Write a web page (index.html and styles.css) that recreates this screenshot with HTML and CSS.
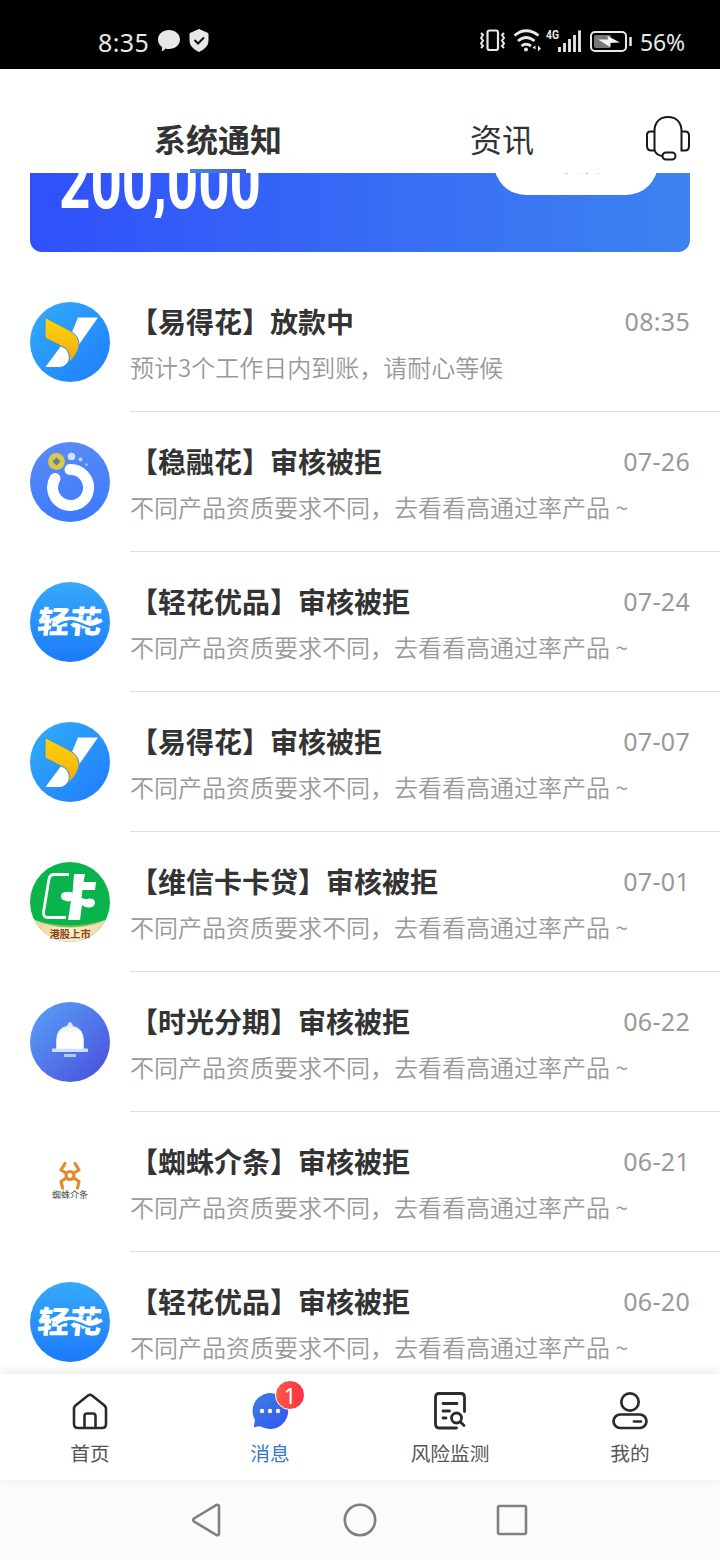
FILE: index.html
```html
<!DOCTYPE html>
<html lang="zh-CN">
<head>
<meta charset="utf-8">
<title>系统通知</title>
<link rel="stylesheet" href="styles.css">
</head>
<body>
<svg class="defs" width="0" height="0" aria-hidden="true">
  <defs>
    <linearGradient id="sky" x1="0" y1="0" x2="1" y2="1"><stop offset="0.1" stop-color="#2fa9fa"/><stop offset="0.9" stop-color="#2180fc"/></linearGradient>
    <linearGradient id="gold" x1="0" y1="0" x2="0" y2="1"><stop offset="0" stop-color="#ffd306"/><stop offset="0.6" stop-color="#f9bd0d"/><stop offset="1" stop-color="#f0a01c"/></linearGradient>
    <linearGradient id="peri" x1="0.3" y1="0" x2="0.5" y2="1"><stop offset="0" stop-color="#5b8af5"/><stop offset="1" stop-color="#3c7bfd"/></linearGradient>
    <linearGradient id="azure" x1="0" y1="0" x2="0" y2="1"><stop offset="0" stop-color="#37a9fa"/><stop offset="1" stop-color="#1b7afa"/></linearGradient>
    <linearGradient id="indigo" x1="0" y1="0" x2="1" y2="1"><stop offset="0.1" stop-color="#589af5"/><stop offset="0.9" stop-color="#4b54df"/></linearGradient>
    <linearGradient id="bellfill" x1="0" y1="0" x2="0" y2="1"><stop offset="0" stop-color="#dce7fd"/><stop offset="0.45" stop-color="#fff"/><stop offset="1" stop-color="#fff"/></linearGradient>
    <linearGradient id="cream" x1="0" y1="0" x2="1" y2="0"><stop offset="0" stop-color="#edcd91"/><stop offset="0.5" stop-color="#fbefd5"/><stop offset="1" stop-color="#efd49c"/></linearGradient>
    <linearGradient id="chat" x1="0" y1="0" x2="1" y2="1"><stop offset="0" stop-color="#3f7fdc"/><stop offset="1" stop-color="#3156f6"/></linearGradient>
    <clipPath id="disc"><circle cx="40" cy="40" r="40"/></clipPath>

    <symbol id="logo-yi" viewBox="0 0 80 80">
      <circle cx="40" cy="40" r="40" fill="url(#sky)"/>
      <path d="M48 15.500H68L48 44Q43 54 37 61Q34 65 29 65H15.500L31 44L42 30Z" fill="#fff"/>
      <path d="M15 15.500L39 28Q50 34 49 44Q48 52 38.500 61Q41 51 35 46L15 36Z" fill="url(#gold)" stroke="#2b92e8" stroke-width="1"/>
    </symbol>
    <symbol id="logo-wen" viewBox="0 0 80 80">
      <circle cx="40" cy="40" r="40" fill="url(#peri)"/>
      <path d="M25 36.500A18 18 0 1 0 40 27.500" fill="none" stroke="#fff" stroke-width="11" stroke-linecap="round"/>
      <circle cx="26.500" cy="19.500" r="8.500" fill="#cfca4d"/><circle cx="26.500" cy="19.500" r="6" fill="none" stroke="#e2cd3c" stroke-width="1.500"/>
      <path d="M26.500 15.500l4 4-4 4-4-4z" fill="#687d91"/>
      <circle cx="41.500" cy="14.500" r="3.800" fill="#cbe3ff"/><circle cx="50.500" cy="17.500" r="2" fill="#b6d4ff"/><circle cx="56.500" cy="22.500" r="1.300" fill="#a9caff"/>
    </symbol>
    <symbol id="logo-qing" viewBox="0 0 80 80">
      <circle cx="40" cy="40" r="40" fill="url(#azure)"/>
      <text class="qing-text" x="12" y="51.500" textLength="64" lengthAdjust="spacingAndGlyphs" transform="skewX(-6)">轻花</text>
      <path d="M28 43C38 37 46 39 54 43S67 44 71 41" fill="none" stroke="#2792fa" stroke-width="2"/>
      <path d="M26 40.500C38 34 46 36 54 40S67 41 72 38" fill="none" stroke="#fff" stroke-width="3.500"/>
    </symbol>
    <symbol id="logo-ka" viewBox="0 0 80 80">
      <g clip-path="url(#disc)">
        <path d="M0 0H80V80H0Z" fill="#08b44b"/>
        <path d="M0 56Q40 74 80 56V80H0Z" fill="url(#cream)"/>
        <path d="M2 57Q40 70 78 57Q40 74 2 57" fill="#86bd59"/>
      </g>
      <path d="M39 12.500H24Q20 12.500 19 17L13.500 50Q13 55.500 18 55.500H36" fill="none" stroke="#fff" stroke-width="2.800"/>
      <path d="M44 12H55L53.500 20H66L65 28H52.500L51.500 36Q56 38 59 36.500Q65 36 65 41Q64 46 58 45.500Q54 45 52 43L50 58H38L41 39Q38 40 35 38.500Q31 38 31 34.500Q31 30 36 30Q40 29 42.500 31Z" fill="#fff"/>
      <text class="ka-text" x="19.500" y="76">港股上市</text>
    </symbol>
    <symbol id="logo-bell" viewBox="0 0 80 80">
      <circle cx="40" cy="40" r="40" fill="url(#indigo)"/>
      <rect x="22" y="46.500" width="36" height="3.600" rx="1" fill="#d3e0fb"/>
      <path d="M37.500 24Q38 20.500 40 20.500T42.500 24Q53 26 53.500 38V47H26.500V38Q27 26 37.500 24Z" fill="url(#bellfill)" stroke="#d5e2fc" stroke-width="0.800"/>
      <rect x="34" y="52" width="12" height="3" rx="0.600" fill="#b8c9f8"/>
    </symbol>
    <symbol id="logo-spider" viewBox="0 0 80 80">
      <g fill="none" stroke="#e58a2a" stroke-width="3.200" stroke-linecap="round" stroke-linejoin="round">
        <circle cx="40" cy="33.500" r="4"/>
        <path d="M36 31L31 28L35 21.500M44 31L49 28L45 21.500M36 36L31 39.500L32.500 46M44 36L49 39.500L47.500 46"/>
      </g>
      <text class="spider-text" x="22" y="56">蜘蛛介条</text>
    </symbol>
  </defs>
</svg>

<div class="status">
  <span class="clock">8:35</span>
  <svg class="bubble" width="54" height="24" viewBox="0 0 54 24" fill="#e8e8e8">
    <path d="M12 1C18 1 23 5 23 10.500S18 20 12 20Q10 20 8.500 19.500Q7 22 4.500 22Q5.500 20 5 18Q1 15 1 10.500C1 5 6 1 12 1Z"/>
    <path d="M42 .5L51 4.500V12Q51 18.500 42 22.500Q33 18.500 33 12V4.500Z" stroke="#e8e8e8" stroke-linejoin="round"/>
    <path d="M37.500 11l3.500 3.500 6-6" fill="none" stroke="#111" stroke-width="2"/>
  </svg>
  <svg class="signals" width="156" height="28" viewBox="0 0 156 28" fill="none" stroke="#e8e8e8">
    <rect x="7.500" y="3.500" width="10.500" height="19.500" rx="2" stroke-width="2.200"/>
    <path d="M1 6l2 2-2 3 2 2.500-2 3 2 2.500-2 2M24 6l-2 2 2 3-2 2.500 2 3-2 2.500 2 2" stroke-width="2"/>
    <path d="M34.500 8.500Q46 -1 58.500 8.500M38 14Q46 7 54.500 14M41.500 19Q46 15.500 51 19" stroke-width="2.800"/>
    <circle cx="46" cy="22.500" r="2" fill="#e8e8e8" stroke="none"/>
    <path d="M55.500 18.500v4l-3-2zM58 18.500v6l3-3z" fill="#e8e8e8" stroke="none"/>
    <text class="net" x="66" y="12" textLength="13" lengthAdjust="spacingAndGlyphs">4G</text>
    <path d="M79.500 20v5M84.500 16v9M89.500 12v13M94.500 8v17M99.500 3.500v21.500" stroke-width="2.800"/>
    <rect x="111" y="5" width="35" height="19" rx="4" stroke-width="2"/>
    <rect x="114" y="8" width="17" height="13" rx="2" fill="#777" stroke="none"/>
    <path d="M118 12.500L128 12.500L127.500 9L140 15.500L130 16L130 20Z" fill="#f2f2f2" stroke="none"/>
    <path d="M150.500 10v9" stroke-width="2.500"/>
  </svg>
  <span class="percent">56%</span>
</div>

<header class="header">
  <div class="tab tab-active">系统通知</div>
  <div class="tab">资讯</div>
  <svg class="headset" width="48" height="48" viewBox="0 0 48 48" fill="none" stroke="#171717" stroke-width="2">
    <path d="M10.500 35V17C10.500 8 16 3 24 3S37.500 8 37.500 17V35M10.500 17.500H6.500Q3 17.500 3 21V32Q3 36.500 7.500 36.500H10.500V17M37.500 17.500H41Q45 17.500 45 21.500V32Q45 36.500 41 36.500H37.500V34M10.500 36Q12 41 18 42"/>
    <rect x="18.500" y="38.500" width="13" height="7" rx="3.500"/>
  </svg>
</header>

<main class="feed">
  <section class="banner">
    <svg class="amount" width="210" height="60" viewBox="0 0 210 60"><text x="-1" y="50" textLength="202" lengthAdjust="spacingAndGlyphs">200,000</text></svg>
    <div class="borrow">立即借款</div>
  </section>
  <ul class="list">
    <li class="item"><svg class="avatar"><use href="#logo-yi"/></svg><div class="body"><div class="row"><h3>【易得花】放款中</h3><time>08:35</time></div><p>预计3个工作日内到账，请耐心等候</p></div></li>
    <li class="item"><svg class="avatar"><use href="#logo-wen"/></svg><div class="body"><div class="row"><h3>【稳融花】审核被拒</h3><time>07-26</time></div><p>不同产品资质要求不同，去看看高通过率产品 ~</p></div></li>
    <li class="item"><svg class="avatar"><use href="#logo-qing"/></svg><div class="body"><div class="row"><h3>【轻花优品】审核被拒</h3><time>07-24</time></div><p>不同产品资质要求不同，去看看高通过率产品 ~</p></div></li>
    <li class="item"><svg class="avatar"><use href="#logo-yi"/></svg><div class="body"><div class="row"><h3>【易得花】审核被拒</h3><time>07-07</time></div><p>不同产品资质要求不同，去看看高通过率产品 ~</p></div></li>
    <li class="item"><svg class="avatar"><use href="#logo-ka"/></svg><div class="body"><div class="row"><h3>【维信卡卡贷】审核被拒</h3><time>07-01</time></div><p>不同产品资质要求不同，去看看高通过率产品 ~</p></div></li>
    <li class="item"><svg class="avatar"><use href="#logo-bell"/></svg><div class="body"><div class="row"><h3>【时光分期】审核被拒</h3><time>06-22</time></div><p>不同产品资质要求不同，去看看高通过率产品 ~</p></div></li>
    <li class="item"><svg class="avatar"><use href="#logo-spider"/></svg><div class="body"><div class="row"><h3>【蜘蛛介条】审核被拒</h3><time>06-21</time></div><p>不同产品资质要求不同，去看看高通过率产品 ~</p></div></li>
    <li class="item"><svg class="avatar"><use href="#logo-qing"/></svg><div class="body"><div class="row"><h3>【轻花优品】审核被拒</h3><time>06-20</time></div><p>不同产品资质要求不同，去看看高通过率产品 ~</p></div></li>
  </ul>
</main>

<nav class="tabbar">
  <a class="entry">
    <svg width="40" height="40" viewBox="0 0 40 40" fill="none" stroke="#2b2b2b" stroke-width="2.600" stroke-linejoin="round"><path d="M18 4.500Q20 3 22 4.500L34.500 14.500Q36 16 36 18V33Q36 37 32 37H8Q4 37 4 33V18Q4 16 5.500 14.500ZM14.500 37V25Q14.500 22.500 17 22.500H23Q25.500 22.500 25.500 25V37"/></svg>
    <span>首页</span>
  </a>
  <a class="entry entry-active">
    <svg width="40" height="40" viewBox="0 0 40 40"><path d="M20 2A18 18 0 1 1 13 36.500Q9 34.500 6 36Q3.500 37 4 34L5 29A18 18 0 0 1 20 2Z" fill="url(#chat)"/><circle cx="12" cy="20" r="2.200" fill="#fff"/><circle cx="20" cy="20" r="2.200" fill="#fff"/><circle cx="28" cy="20" r="2.200" fill="#fff"/></svg>
    <b class="badge">1</b>
    <span>消息</span>
  </a>
  <a class="entry">
    <svg width="40" height="40" viewBox="0 0 40 40" fill="none" stroke="#2b2b2b" stroke-width="2.800" stroke-linecap="round"><path d="M26.500 37H9Q5.500 37 5.500 33V6.500Q5.500 2.500 9 2.500H31Q34.500 2.500 34.500 6.500V20.500M13 12.500H27M13 20H19.500M13 27H16M31 31.500L34 34.500"/><circle cx="26.500" cy="27" r="5"/></svg>
    <span>风险监测</span>
  </a>
  <a class="entry">
    <svg width="40" height="40" viewBox="0 0 40 40" fill="none" stroke="#2b2b2b" stroke-width="2.700" stroke-linecap="round"><circle cx="20" cy="11" r="8.700"/><rect x="3.500" y="23.500" width="33" height="13.500" rx="6.750"/><path d="M24 30.500H31"/></svg>
    <span>我的</span>
  </a>
</nav>

<footer class="system">
  <svg width="34" height="36" viewBox="0 0 34 36"><path d="M3 16.500L25.500 3Q28 2 28 5V31Q28 34 25.500 33L3 19.500Q1.500 18 3 16.500Z"/></svg>
  <svg width="36" height="36" viewBox="0 0 36 36"><circle cx="18" cy="18" r="15.200"/></svg>
  <svg width="34" height="36" viewBox="0 0 34 36"><rect x="3" y="4" width="28" height="28" rx="1.500"/></svg>
</footer>
</body>
</html>
```

FILE: styles.css
```css
* { box-sizing: border-box; }

body {
  margin: 0;
  width: 720px;
  height: 1560px;
  display: flex;
  flex-direction: column;
  overflow: hidden;
  background: #fff;
  color: #333;
  font-family: "Noto Sans CJK SC", "Noto Sans", sans-serif;
}

.defs { position: absolute; }

.status {
  flex: none;
  height: 69px;
  padding: 14px 34px 0 98px;
  display: flex;
  align-items: center;
  background: #000;
  color: #e8e8e8;
  font: 25px/30px "Noto Sans", sans-serif;
}
.clock { width: 59px; letter-spacing: 0.4px; white-space: nowrap; }
.bubble { margin-bottom: 2px; }
.signals { margin-left: auto; margin-right: 4px; margin-bottom: 1px; }
.percent { width: 46px; padding-top: 1px; font-size: 23px; letter-spacing: -0.2px; white-space: nowrap; }
.net { font: 700 12px Roboto, sans-serif; fill: #e8e8e8; stroke: none; }

.header {
  flex: none;
  height: 104px;
  padding-left: 76px;
  display: flex;
  position: relative;
}
.tab {
  width: 284px;
  padding-top: 45px;
  text-align: center;
  font-size: 32px;
  line-height: 48px;
}
.tab-active { font-weight: 700; }
.tab-active::after {
  content: "";
  display: block;
  width: 56px;
  height: 4px;
  margin: 7px auto 0;
  background: linear-gradient(90deg, #4b88dd, #405bc6);
}
.headset { position: absolute; right: 28px; top: 45px; }

.feed { flex: none; height: 1201px; overflow: hidden; }

.banner {
  height: 79px;
  margin: 0 30px 20px;
  display: flex;
  justify-content: space-between;
  align-items: flex-start;
  padding: 0 32px 0 30px;
  border-radius: 0 0 12px 12px;
  background: linear-gradient(90deg, #3050fb, #3d83ef);
}
.amount { margin-top: -15px; }
.amount text { font: 700 76px Roboto, sans-serif; fill: #fff; }
.borrow {
  width: 164px;
  height: 64px;
  margin-top: -42px;
  border-radius: 32px;
  background: #fff;
  color: #3b73e8;
  text-align: center;
  font-size: 26px;
  line-height: 58px;
}

.list { margin: 0; padding: 0; list-style: none; }
.item { display: flex; gap: 20px; height: 140px; padding-left: 30px; }
.avatar { flex: none; width: 80px; height: 80px; margin-top: 30px; }
.body { flex: 1; padding: 29px 30px 0 0; border-bottom: 1px solid #dedede; }
.row { display: flex; justify-content: space-between; height: 40px; }
h3 { margin: 0; font-size: 28px; line-height: 40px; font-weight: 700; white-space: nowrap; text-spacing-trim: space-all; }
time { color: #999; font: 25px/40px "Noto Sans", sans-serif; letter-spacing: 0.3px; }
p { margin: 6px 0 0; color: #999; font-size: 24px; line-height: 40px; white-space: nowrap; font-weight: 350; }

.qing-text { font: 900 31px "Noto Sans CJK SC", sans-serif; fill: #fff; }
.ka-text { font: 700 10.3px "Noto Sans CJK SC", sans-serif; fill: #8a4717; }
.spider-text { font: 9px "Noto Sans CJK SC", sans-serif; fill: #444; }

.tabbar {
  flex: none;
  height: 106px;
  display: flex;
  position: relative;
  background: #fff;
  box-shadow: 0 -2px 10px rgba(0, 0, 0, 0.09);
}
.entry {
  flex: 1;
  position: relative;
  display: flex;
  flex-direction: column;
  align-items: center;
  padding-top: 17px;
  color: #555;
  font-size: 19.7px;
  line-height: 30px;
}
.entry span { margin-top: 7px; }
.entry-active { color: #3b78c9; }
.badge {
  position: absolute;
  left: 95px;
  top: 6px;
  width: 30px;
  height: 30px;
  border: 1px solid #fff;
  border-radius: 50%;
  background: linear-gradient(90deg, #fd5b45, #fb3148);
  color: #fff;
  font: 22px/29px "Noto Sans", sans-serif;
  text-align: center;
}

.system {
  flex: none;
  height: 80px;
  display: flex;
  justify-content: center;
  align-items: center;
  gap: 117px;
  background: #fbfbfb;
}
.system svg { fill: none; stroke: #808080; stroke-width: 2.6; }
```
